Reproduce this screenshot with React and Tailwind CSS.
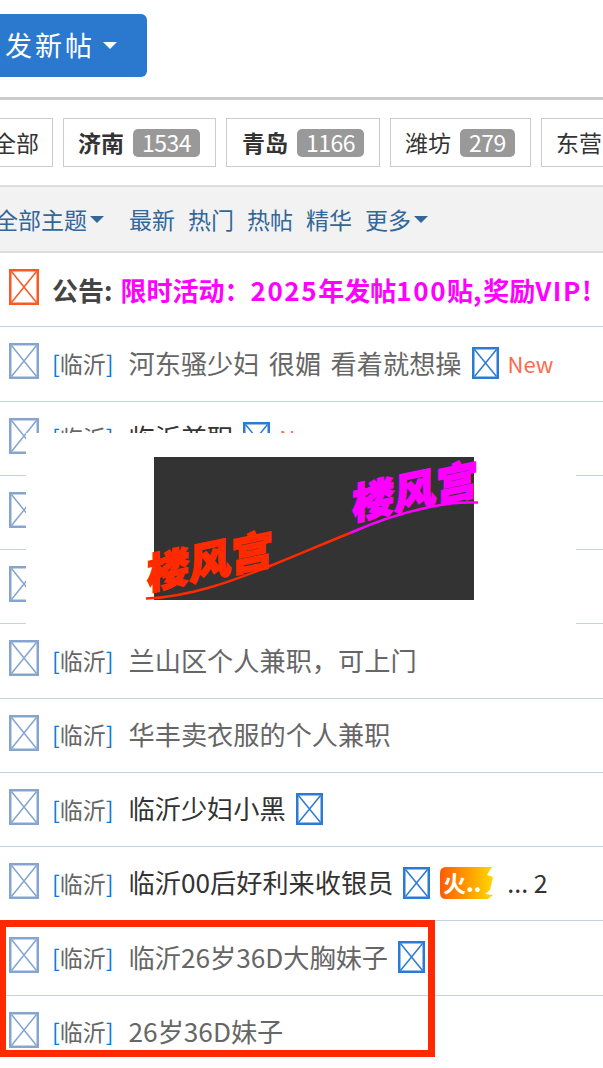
import React from 'react';

const tabs = [
  { name: '全部', cls: 'w-[73px] -ml-[20px] pl-[12px]' },
  { name: '济南', count: 1534, bold: true, cls: 'w-[153px] pl-[14px]' },
  { name: '青岛', count: 1166, bold: true, cls: 'w-[154px] pl-[15px]' },
  { name: '潍坊', count: 279, cls: 'w-[141px] pl-[14px]' },
  { name: '东营', cls: 'w-[100px] pl-[14px]' },
];

const rows = [
  { title: '河东骚少妇 很媚 看着就想操', gray: true, icon: true, isNew: true },
  { title: '临沂兼职', icon: true, isNew: true },
  {},
  {},
  { title: '兰山区个人兼职，可上门', gray: true },
  { title: '华丰卖衣服的个人兼职', gray: true },
  { title: '临沂少妇小黑', icon: true },
  { title: '临沂00后好利来收银员', icon: true, hot: true, pages: '... 2' },
  { title: '临沂26岁36D大胸妹子', gray: true, icon: true },
  { title: '26岁36D妹子', gray: true },
];

// broken image placeholder
const BrokenImg = ({ w, h, color, sw = 2.5 }) => (
  <svg width={w} height={h} viewBox={`0 0 ${w} ${h}`} className="shrink-0">
    <rect x={sw / 2} y={sw / 2} width={w - sw} height={h - sw} fill="none" stroke={color} strokeWidth={sw} />
    <path d={`M${sw} ${sw}L${w - sw} ${h - sw}M${w - sw} ${sw}L${sw} ${h - sw}`} stroke={color} strokeWidth="1.5" fill="none" />
  </svg>
);

const Flame = () => (
  <svg width="54" height="33" viewBox="0 0 54 33" className="shrink-0 ml-[10px]">
    <defs>
      <linearGradient id="flame" x1="0" y1="0" x2="1" y2="0">
        <stop offset="0" stopColor="#ff5a00" />
        <stop offset="1" stopColor="#ffd800" />
      </linearGradient>
    </defs>
    <path
      d="M6 0H52L47 8L53 10L50 23L45 27L53 28L48 32H6Q0 32 0 26V6Q0 0 6 0Z"
      fill="url(#flame)"
    />
    <text x="3" y="25" fontSize="23" fontWeight="700" fill="#fff">火</text>
    <text x="26" y="25" fontSize="22" fontWeight="900" fill="#fff">..</text>
  </svg>
);

const Logo = () => (
  <svg width="340" height="150" viewBox="146 455 340 150" className="overflow-visible">
    <rect x="154" y="457" width="320" height="143" fill="#333333" />
    <path d="M146 598.5C190 597 235 580 270 566S325 543 350 533" fill="none" stroke="#ff2a00" strokeWidth="2.5" />
    <path d="M350 533C375 522 400 513 430 507S465 503 478 502.5" fill="none" stroke="#ff00ff" strokeWidth="2.5" />
    <text transform="translate(147 590) skewY(-12)" fontSize="42" fontWeight="900" fill="#ff2a00" stroke="#ff2a00" strokeWidth="1.5">楼风宫</text>
    <text transform="translate(352 520) skewY(-12)" fontSize="42" fontWeight="900" fill="#ff00ff" stroke="#ff00ff" strokeWidth="1.5">楼风宫</text>
  </svg>
);

const Caret = ({ cls }) => <span className={`inline-block w-0 h-0 border-x-[7px] border-t-[7px] border-x-transparent ${cls}`} />;

const App = () => {
  return (
    <div className="relative w-[603px] h-[1068px] overflow-hidden bg-white font-['Noto_Sans_CJK_SC','Noto_Sans',sans-serif]">
      {/* Post button */}
      <div className="h-[97px] pt-[14px]">
        <button className="flex items-center -ml-[10px] w-[157px] h-[63px] pl-[15px] rounded-md bg-[#2b78cf] text-white text-[27px] tracking-[3px]">
          发新帖
          <Caret cls="border-t-white ml-[8px]" />
        </button>
      </div>
      <div className="h-[3px] bg-[#cccccc]" />

      {/* City tabs */}
      <div className="flex gap-[10px] pt-[18px] h-[85px] whitespace-nowrap">
        {tabs.map((tab) => (
          <div
            key={tab.name}
            className={`flex shrink-0 items-center h-[49px] border border-[#cccccc] text-[23px] text-[#333333] ${tab.cls} ${tab.bold ? 'font-bold' : ''}`}
          >
            {tab.name}
            {tab.count && (
              <span className="ml-[9px] h-[28px] px-[9px] flex items-center rounded-[5px] bg-[#999999] text-white text-[23px] font-normal tracking-[-0.5px]">
                {tab.count}
              </span>
            )}
          </div>
        ))}
      </div>

      {/* Filter bar */}
      <div className="flex items-center h-[68px] -ml-[5px] border-y-2 border-y-[#dddddd] bg-[#f2f2f2] text-[23px] text-[#336699] whitespace-nowrap">
        <span>全部主题</span>
        <Caret cls="border-t-[#336699] ml-[3px]" />
        <span className="ml-[25px]">最新</span>
        <span className="ml-[13px]">热门</span>
        <span className="ml-[13px]">热帖</span>
        <span className="ml-[13px]">精华</span>
        <span className="ml-[13px]">更多</span>
        <Caret cls="border-t-[#336699] ml-[3px]" />
      </div>

      {/* Notice */}
      <div className="flex items-start h-[74.3px] pl-[9px] pt-[16px] border-b border-[#c5d5e4] whitespace-nowrap">
        <BrokenImg w={30} h={36} color="#ff5722" />
        <div className="flex items-center h-[44px] -mt-[2px] text-[26px] font-bold">
          <span className="ml-[13px] text-[#444444]">公告:</span>
          <span className="ml-[8px] text-[#ff00ff]">
            限时活动：<span className="tracking-[1.6px]">2025</span>年发帖<span className="tracking-[1.6px]">100</span>贴<span className="tracking-[1.6px]">,</span>奖励<span className="tracking-[1.6px]">VIP!</span>
          </span>
        </div>
      </div>

      {/* Thread list */}
      {rows.map((row, i) => (
        <div key={i} className="flex items-start h-[74.25px] pl-[9px] pt-[16px] border-b border-[#c5d5e4] whitespace-nowrap">
          <BrokenImg w={30} h={36} color="#85a5d0" />
          {row.title && (
            <div className="flex items-center h-[42px] -mt-[1px]">
              <span className="ml-[13px] text-[23px] text-[#666666]">
                <span className="text-[#0a7ad6]">[</span>临沂<span className="text-[#0a7ad6]">]</span>
              </span>
              <span className={`ml-[15px] text-[26.2px] [word-spacing:3.5px] ${row.gray ? 'text-[#666666]' : 'text-[#333333]'}`}>{row.title}</span>
              {row.icon && <span className="ml-[10px]"><BrokenImg w={27} h={32} color="#2b7bd6" /></span>}
              {row.isNew && <span className="ml-[9px] text-[22px] text-[#ff6a4d]">New</span>}
              {row.hot && <Flame />}
              {row.pages && <span className="ml-[13px] text-[25px] text-[#333333]">{row.pages}</span>}
            </div>
          )}
        </div>
      ))}

      {/* Ad overlay */}
      <div className="absolute left-[26px] top-[433px] w-[550px] h-[192px] bg-white pt-[22px] pl-[120px]">
        <Logo />
      </div>

      {/* Red annotation box */}
      <div className="absolute -left-[1px] top-[920px] w-[436px] h-[137px] border-[7px] border-[#ff2a00]" />
    </div>
  );
};

export default App;
